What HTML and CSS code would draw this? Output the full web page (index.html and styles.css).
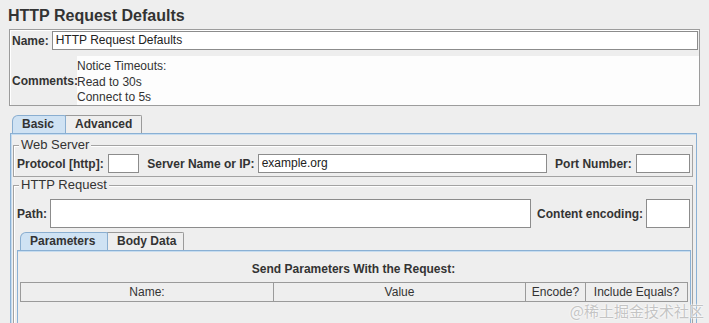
FILE: index.html
```html
<!DOCTYPE html>
<html>
<head>
<meta charset="utf-8">
<link rel="stylesheet" href="styles.css">
</head>
<body>
<div class="page">
  <div class="title">HTTP Request Defaults</div>
  <div class="box">
    <div class="name-row">
      <span class="lbl">Name:</span>
      <div class="input name-input">HTTP Request Defaults</div>
    </div>
    <div class="comments-row">
      <span class="lbl">Comments:</span>
      <div class="textarea">
        <div>Notice Timeouts:</div>
        <div>Read to 30s</div>
        <div>Connect to 5s</div>
      </div>
    </div>
  </div>

  <div class="tabs outer-tabs">
    <div class="tab active">Basic</div>
    <div class="tab">Advanced</div>
  </div>
  <div class="panel">
    <div class="group web">
      <div class="legend">Web Server</div>
      <div class="row">
        <span class="lbl">Protocol [http]:</span>
        <div class="input proto"></div>
        <span class="lbl">Server Name or IP:</span>
        <div class="input server">example.org</div>
        <span class="lbl">Port Number:</span>
        <div class="input port"></div>
      </div>
    </div>
    <div class="group http">
      <div class="legend">HTTP Request</div>
      <div class="row path-row">
        <span class="lbl">Path:</span>
        <div class="input path"></div>
        <span class="lbl">Content encoding:</span>
        <div class="input enc"></div>
      </div>
      <div class="tabs inner-tabs">
        <div class="tab active">Parameters</div>
        <div class="tab">Body Data</div>
      </div>
      <div class="inner-panel">
        <div class="send">Send Parameters With the Request:</div>
        <div class="table">
          <div class="th c1">Name:</div>
          <div class="th c2">Value</div>
          <div class="th c3">Encode?</div>
          <div class="th c4">Include Equals?</div>
        </div>
      </div>
    </div>
  </div>
  <div class="watermark">@稀土掘金技术社区</div>
</div>
</body>
</html>
```

FILE: styles.css
```css
* { box-sizing: border-box; }
html, body { margin: 0; padding: 0; }
body {
  background: #eeeeee;
  font-family: "Liberation Sans", Arial, sans-serif;
  font-size: 12px;
  color: #333;
  width: 709px;
  height: 323px;
  overflow: hidden;
}
.page { position: relative; height: 323px; }
.title {
  font-weight: bold;
  font-size: 16px;
  color: #333;
  padding: 6px 0 0 8px;
  height: 29px;
  line-height: 20px;
}
.box {
  margin: 0 9px 0 9px;
  border: 1px solid #9c9c9c;
  box-shadow: inset 1px 1px 0 #fff;
  height: 77px;
}
.lbl { font-weight: bold; color: #333; white-space: nowrap; }
.input {
  background: #fff;
  border: 1px solid #8c8c8c;
  height: 19px;
  line-height: 17px;
  padding-left: 3px;
  color: #222;
  white-space: nowrap;
}
.name-row {
  display: flex;
  align-items: center;
  padding: 1px 1px 0 1px;
  gap: 3px;
}
.name-row .lbl { margin-left: 1px; }
.name-input { flex: 1; font-size: 12px; }
.comments-row {
  display: flex;
  align-items: center;
  margin-top: 6px;
  padding-left: 2px;
}
.comments-row .lbl { margin-right: -1px; }
.textarea {
  flex: 1;
  background: #fdfdfd;
  height: 49px;
  padding-top: 3px;
  line-height: 15.5px;
}
.tabs { display: flex; align-items: flex-end; }
.outer-tabs { margin: 9px 0 0 12px; height: 18px; }
.tab {
  height: 18px;
  line-height: 17px;
  border: 1px solid #9a9a9a;
  border-bottom: none;
  padding: 0 9px;
  font-weight: bold;
  background: #eeeeee;
  border-top-right-radius: 2px;
  margin-right: -1px;
  white-space: nowrap;
  flex: none;
}
.tab.active {
  background: #cfe2f3;
  border-color: #8aaed0;
  border-top-left-radius: 6px;
  position: relative;
  z-index: 1;
}
.outer-tabs .tab.active { width: 54px; padding-left: 9px; }
.outer-tabs .tab:not(.active) { width: 77px; }
.panel {
  margin: 0 12px 0 10px;
  border: 1px solid #8ab0d4;
  box-shadow: inset 0 1px 0 #c6dcef, inset 1px 0 0 #c6dcef;
  padding: 5px 3px 0 2px;
  height: 200px;
}
.group {
  border: 1px solid #a3a3a3;
  box-shadow: inset 1px 1px 0 #fff;
  position: relative;
  margin-top: 6px;
}
.legend {
  position: absolute;
  top: -9px;
  left: 5px;
  background: #eeeeee;
  padding: 0 2px;
  font-size: 13px;
  line-height: 16px;
}
.web { height: 32px; }
.row {
  display: flex;
  align-items: center;
  gap: 4px;
  padding: 8px 2px 0 3px;
}
.proto { width: 32px; }
.row .proto + .lbl { margin-left: 4px; }
.server { width: 294px; margin-left: -1px; }
.server + .lbl { margin-left: 4px; }
.port { width: 55px; }
.http { margin-top: 8px; height: 140px; }
.path-row { padding-top: 13px; gap: 3px; }
.path-row .input { height: 29px; }
.path { width: 482px; }
.path + .lbl { margin-left: 3px; }
.enc { width: 44px; }
.inner-tabs { margin: 4px 0 0 6px; height: 18px; }
.inner-tabs .tab.active { width: 88px; }
.inner-tabs .tab:not(.active) { width: 77px; }
.inner-panel {
  margin: 0 1px 0 3px;
  border: 1px solid #8ab0d4;
  box-shadow: inset 0 1px 0 #c6dcef;
  height: 80px;
  padding: 10px 3px 0 2px;
}
.send { text-align: center; font-weight: bold; line-height: 16px; }
.table {
  display: flex;
  margin-top: 5px;
  border-top: 1px solid #9a9a9a;
  border-left: 1px solid #9a9a9a;
  height: 20px;
  width: 668px;
}
.th {
  border-right: 1px solid #9a9a9a;
  border-bottom: 1px solid #9a9a9a;
  text-align: center;
  line-height: 18px;
  font-size: 12px;
  color: #333;
  background: #eeeeee;
}
.c1 { width: 253px; }
.c2 { width: 252px; }
.c3 { width: 60px; }
.c4 { width: 102px; }
.watermark {
  position: absolute;
  right: 5px;
  top: 303px;
  font-family: "Noto Sans CJK SC", sans-serif;
  font-size: 15px;
  line-height: 16px;
  color: #c4c4c4;
  text-shadow: 0 0 2px #fff, 0 0 2px #fff;
}
```
